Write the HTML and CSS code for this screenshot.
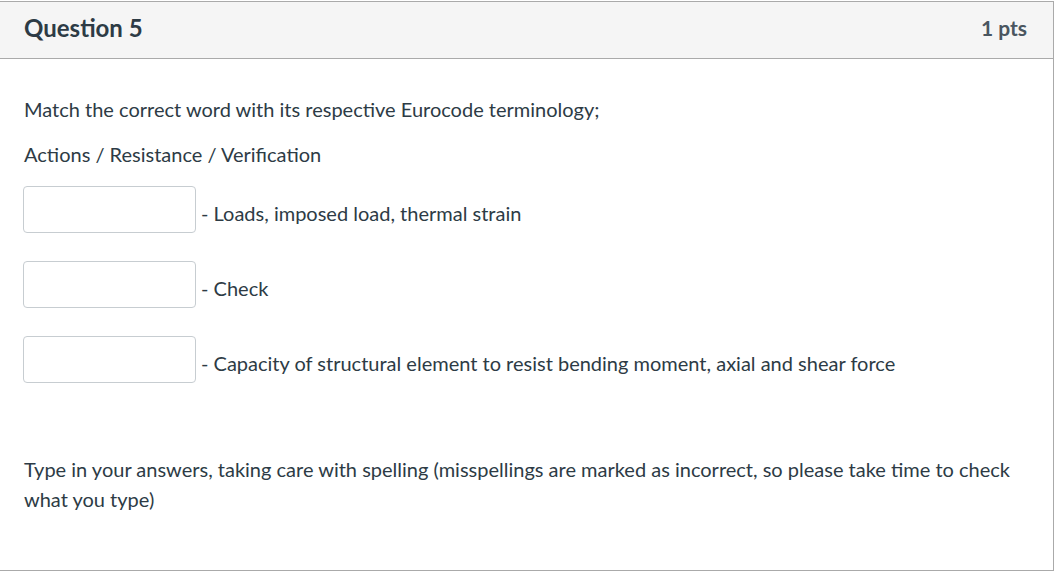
FILE: index.html
```html
<!DOCTYPE html>
<html>
<head>
<meta charset="utf-8">
<link rel="stylesheet" href="styles.css">
</head>
<body>
<div class="question">
  <div class="header">
    <h2 class="title">Question 5</h2>
    <span class="pts">1 pts</span>
  </div>
  <div class="content">
    <p class="para first">Match the correct word with its respective Eurocode terminology;</p>
    <p class="para">Actions / Resistance / Verification</p>
    <div class="answers">
      <div class="row"><input class="box" type="text"><span class="label">- Loads, imposed load, thermal strain</span></div>
      <div class="row"><input class="box" type="text"><span class="label">- Check</span></div>
      <div class="row"><input class="box" type="text"><span class="label">- Capacity of structural element to resist bending moment, axial and shear force</span></div>
    </div>
    <p class="para note">Type in your answers, taking care with spelling (misspellings are marked as incorrect, so please take time to check what you type)</p>
  </div>
</div>
</body>
</html>
```
FILE: styles.css
```css
html, body {
  margin: 0;
  padding: 0;
  background: #fff;
}
body {
  font-family: Lato, "Liberation Sans", sans-serif;
  color: #2d3b45;
  overflow: hidden;
}
.question {
  margin: 1px 0 0 -1px;
  width: 1053px;
  height: 568px;
  border: 1px solid #aaaaaa;
}
.header {
  background: #f5f5f5;
  border-bottom: 1px solid #aaaaaa;
  height: 56px;
  display: flex;
  align-items: center;
  justify-content: space-between;
  padding: 0 26px 0 24px;
}
.title {
  margin: 0 0 5px;
  font-size: 24px;
  font-weight: 700;
}
.pts {
  margin-bottom: 5px;
  font-size: 21px;
  font-weight: 700;
  color: #4a5660;
}
.content {
  padding: 0 24px;
}
.para {
  margin: 0;
  font-size: 20px;
  line-height: 30px;
}
.first {
  padding-top: 35px;
}
.para + .para {
  margin-top: 15px;
}
.answers {
  margin-top: 17px;
  display: flex;
  flex-direction: column;
  gap: 28px;
}
.row {
  display: flex;
  align-items: center;
}
.box {
  width: 173px;
  height: 47px;
  margin: 0 0 0 -1px;
  padding: 0;
  box-sizing: border-box;
  border: 1px solid #c7cdd1;
  border-radius: 4px;
  background: #fff;
}
.label {
  font-size: 20px;
  margin-left: 5px;
  padding-top: 7px;
}
.note {
  margin-top: 71px;
}
```
